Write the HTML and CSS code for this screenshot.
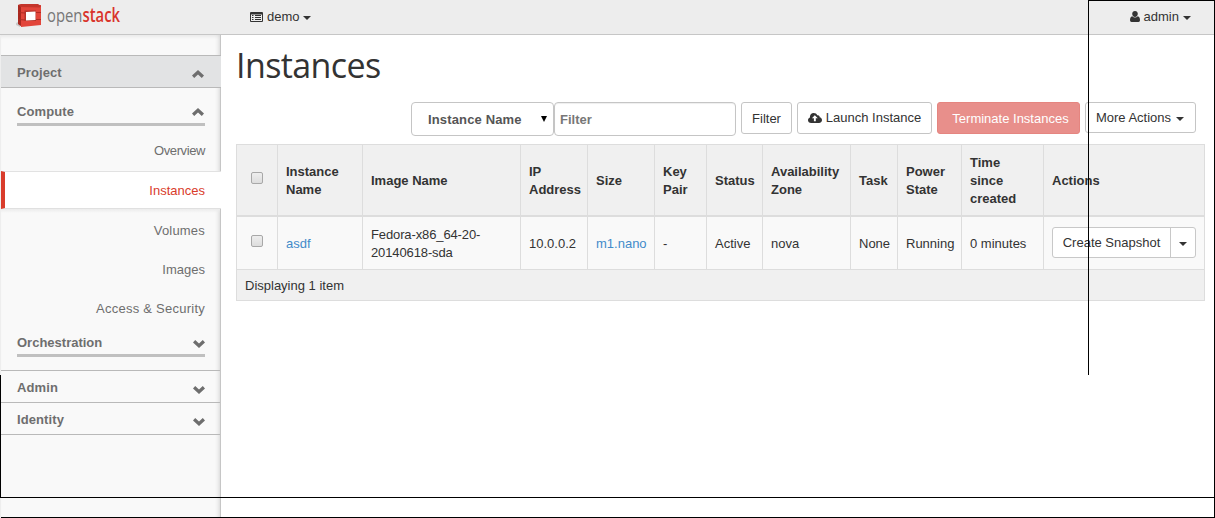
FILE: index.html
```html
<!DOCTYPE html>
<html lang="en">
<head>
<meta charset="utf-8">
<title>Instances</title>
<link rel="stylesheet" href="styles.css">
</head>
<body>
<svg class="defs" width="0" height="0">
  <symbol id="up" viewBox="0 0 12 8"><path d="M0 5.6 6 0l6 5.6L9.8 8 6 4.6 2.2 8z"/></symbol>
  <symbol id="down" viewBox="0 0 12 8"><path d="M0 2.4 2.200 0 6 3.400 9.800 0 12 2.400 6 8z"/></symbol>
</svg>
<header class="topbar">
  <svg class="logo" width="110" height="32" viewBox="0 0 110 32">
    <path fill="#c9c9c9" d="M-1 23l4-2v6l-4-2z"/>
    <path fill="#a9281f" d="M1 5l4-1v23l-4-3z"/>
    <path fill="#e2453a" d="M4 6l20-1v20L4 27z"/>
    <path fill="#c4352b" d="M1 5l4-1h16l3 2-1 1.500L4 7z"/>
    <path fill="#b5332a" d="M7.500 10.500H19V21H7.500z"/>
    <path fill="#fff" d="M9 12l9.500-.5V20L9 20.500z"/>
    <path stroke="#b02c22" fill="none" d="M1 12.500l7 .5M1 19.500l7 .5M19 12.500h5M19 19.500h5"/>
    <text x="30" y="21.500" textLength="73" lengthAdjust="spacingAndGlyphs" class="logo-text">open<tspan class="logo-stack">stack</tspan></text>
  </svg>
  <div class="project-pick">
    <svg width="13" height="10" viewBox="0 0 13 10"><path fill="#333" fill-rule="evenodd" d="M1 0h11q1 0 1 1v8q0 1-1 1H1Q0 10 0 9V1q0-1 1-1zM1 2.500V9h11V2.500z"/><path stroke="#333" d="M2 3.500h1.500M5 3.500h6M2 5.500h1.500M5 5.500h6M2 7.500h1.500M5 7.500h6"/></svg>
    <span>demo</span><i class="caret"></i>
  </div>
  <div class="user-pick">
    <svg width="10" height="11" viewBox="0 0 10 11"><path fill="#333" d="M5 0c1.700 0 2.800 1.200 2.800 2.800S6.600 6 5 6 2.200 4.400 2.200 2.800 3.300 0 5 0zM2.200 5.200Q5 7.800 7.800 5.200 10 5.700 10 9.300q0 1.700-1.500 1.700h-7Q0 11 0 9.300 0 5.700 2.200 5.200z"/></svg>
    <span>admin</span><i class="caret"></i>
  </div>
</header>
<div class="shell">
  <nav class="sidebar">
    <div class="dash active"><span>Project</span><svg><use href="#up"/></svg></div>
    <div class="group compute"><span>Compute</span><svg><use href="#up"/></svg></div>
    <ul class="panels">
      <li class="first">Overview</li>
      <li class="current">Instances</li>
      <li class="after">Volumes</li>
      <li>Images</li>
      <li class="wide">Access &amp; Security</li>
    </ul>
    <div class="group orchestration"><span>Orchestration</span><svg><use href="#down"/></svg></div>
    <div class="dash admin"><span>Admin</span><svg><use href="#down"/></svg></div>
    <div class="dash identity"><span>Identity</span><svg><use href="#down"/></svg></div>
  </nav>
  <main class="content">
    <h1>Instances</h1>
    <div class="actions">
      <div class="select"><span>Instance Name</span><svg width="6" height="6" viewBox="0 0 6 6"><path d="M0 0h6L3 6z"/></svg></div>
      <div class="field">Filter</div>
      <div class="btn filter">Filter</div>
      <div class="btn launch"><svg width="14" height="10" viewBox="0 0 14 10"><path fill="#333" fill-rule="evenodd" d="M3.200 10C1.200 10 0 8.700 0 7.200 0 5.900.8 5 1.900 4.500 1.700 2 3.300 0 5.700 0c1.700 0 3 .9 3.500 2.300 1.400-.6 2.800.5 2.400 2C13 4.600 14 5.700 14 7.100 14 8.700 12.800 10 11 10zM6.800 2.300 3.900 5.300h2V8.200h1.900V5.300h2z"/></svg><span>Launch Instance</span></div>
      <div class="btn danger">Terminate Instances</div>
      <div class="btn more"><span>More Actions</span><i class="caret"></i></div>
    </div>
    <table>
      <colgroup><col class="w41"><col class="w85"><col class="w158"><col class="w67"><col class="w67"><col class="w52"><col class="w56"><col class="w88"><col class="w47"><col class="w64"><col class="w82"><col class="w161"></colgroup>
      <thead><tr><th class="check"><i class="box"></i></th><th>Instance<br>Name</th><th>Image Name</th><th>IP<br>Address</th><th>Size</th><th>Key<br>Pair</th><th>Status</th><th>Availability<br>Zone</th><th>Task</th><th>Power<br>State</th><th>Time<br>since<br>created</th><th>Actions</th></tr></thead>
      <tbody><tr><td class="check"><i class="box"></i></td><td><a>asdf</a></td><td class="image">Fedora-x86_64-20-<br>20140618-sda</td><td>10.0.0.2</td><td><a>m1.nano</a></td><td>-</td><td>Active</td><td>nova</td><td>None</td><td>Running</td><td>0 minutes</td><td class="snap"><div class="split"><span>Create Snapshot</span><b><i class="caret"></i></b></div></td></tr></tbody>
      <tfoot><tr><td colspan="12">Displaying 1 item</td></tr></tfoot>
    </table>
  </main>
</div>
<i class="rule top"></i><i class="rule middle"></i><i class="rule right"></i><i class="rule left"></i><i class="rule lower"></i><i class="rule bottom"></i>
</body>
</html>
```
FILE: styles.css
```css
* { box-sizing: border-box; }
body { margin: 0; width: 1215px; height: 518px; overflow: hidden; position: relative; background: #fff; color: #333; font: 13px/18px "Liberation Sans", Arial, sans-serif; }
.defs { position: absolute; }
svg { display: block; flex: none; }
.topbar { height: 35px; background: #ededed; border-bottom: 1px solid #c6c6c6; display: flex; padding-left: 17px; }
.logo { overflow: visible; }
.logo-text { font: 19px "Open Sans", sans-serif; fill: #777; }
.logo-stack { fill: #d9332b; font-weight: 600; }
.project-pick, .user-pick { display: flex; align-items: center; height: 33px; }
.project-pick { margin-left: 123px; }
.project-pick span, .user-pick span { margin: 0 4px; }
.user-pick { margin-left: auto; margin-right: 24px; }
.caret { display: inline-block; border: 4px solid transparent; border-top-color: #333; border-bottom: 0; }
.topbar .caret { margin-top: 3px; margin-left: -1px; }
.user-pick .caret { margin-left: 0; }
.shell { display: flex; height: 483px; }
.sidebar { width: 221px; padding-top: 20px; background: #f9f9f9; border-left: 1px solid #eee; border-right: 1px solid #c6c6c6; box-shadow: inset -5px 0 4px -4px #d5d5d5, inset 0 4px 4px -3px #e2e2e2; color: #6e6e6e; }
.dash { height: 32px; border-bottom: 1px solid #b9b9b9; padding: 0 15px 0 16px; display: flex; align-items: center; justify-content: space-between; font-weight: bold; letter-spacing: .1px; }
.dash svg, .group svg { width: 12px; height: 8px; fill: #6e6e6e; }
.dash svg { margin-top: 6px; }
.dash.active { height: 33px; background: #e2e3e4; border-top: 1px solid #b9b9b9; margin-right: -1px; padding-right: 17px; padding-top: 2px; }
.dash.active svg { margin-top: 2px; }
.group { margin: 0 15px 0 16px; display: flex; justify-content: space-between; align-items: center; border-bottom: 3px solid #c0c0c0; font-weight: bold; }
.compute { height: 25px; margin-top: 13px; letter-spacing: .1px; }
.compute svg { margin-right: 1px; }
.orchestration { height: 29px; padding-top: 4px; }
.orchestration svg { margin-top: 1px; }
.panels { list-style: none; margin: 0; padding: 0; }
.panels li { height: 39px; padding-right: 15px; display: flex; align-items: center; justify-content: flex-end; }
.panels .wide { letter-spacing: .25px; }
.panels .first { height: 45px; padding-top: 5px; letter-spacing: -.4px; }
.panels .current { height: 38px; margin-right: -1px; padding-right: 16px; padding-top: 2px; background: #fff; color: #d93c2b; border-left: 4px solid #d93c2b; border-top: 1px solid #e2e2e2; border-bottom: 1px solid #e0e0e0; }
.panels .after { height: 41px; padding-top: 3px; background: linear-gradient(#ececec, transparent 4px); letter-spacing: .2px; }
.admin { margin-top: 13px; height: 33px; border-top: 1px solid #b9b9b9; }
.admin, .identity { padding-top: 2px; }
.admin svg, .identity svg { margin-top: 4px; }
.content { width: 994px; padding: 9px 10px 0 15px; }
h1 { margin: 0; height: 43px; font: 400 34px/42px "Open Sans", sans-serif; letter-spacing: -.6px; }
.actions { height: 57px; padding: 15px 9px 0 0; display: flex; align-items: flex-start; justify-content: flex-end; }
.select, .field, .btn { border: 1px solid #c5c5c5; border-radius: 4px; background: #fff; display: flex; align-items: center; }
.select, .field { height: 34px; padding-top: 2px; font-weight: bold; color: #555; }
.select { width: 143px; padding: 2px 6px 0 16px; justify-content: space-between; }
.select span { letter-spacing: .15px; }
.select svg { margin-top: -2px; }
.field { width: 182px; padding-left: 5px; color: #777; margin-right: 5px; box-shadow: inset 0 1px 1px #eee; }
.btn { height: 32px; justify-content: center; border-radius: 3px; margin-right: 5px; }
.filter { width: 51px; padding-top: 2px; }
.launch { width: 135px; gap: 4px; }
.danger { width: 143px; background: #e88f8b; border-color: #e58580; color: #fff; padding: 2px 0 0 4px; }
.more { width: 111px; height: 31px; gap: 5px; margin: 0; padding-right: 1px; }
.more .caret { margin-top: 3px; }
table { table-layout: fixed; width: 969px; border: 1px solid #ddd; border-right: 0; border-bottom: 0; border-collapse: separate; border-spacing: 0; }
th, td { border-right: 1px solid #ddd; border-bottom: 1px solid #ddd; padding: 2px 0 0 8px; text-align: left; white-space: nowrap; vertical-align: middle; }
th { height: 72px; background: #f0f0f0; border-bottom-width: 2px; }
td { height: 53px; background: #f9f9f9; }
tfoot td { height: 31px; background: #f0f0f0; }
a { color: #428bca; }
.image { letter-spacing: -.12px; }
.check { padding: 0 0 5px 14px; }
.box { display: block; width: 12px; height: 12px; border: 1px solid #a8a8a8; border-radius: 2px; background: linear-gradient(#eee, #ddd); }
.snap { padding: 0 0 1px 8px; }
.split { display: flex; width: 144px; height: 31px; border: 1px solid #c8c8c8; border-radius: 3px; background: #fff; }
.split span { width: 118px; border-right: 1px solid #c8c8c8; text-align: center; line-height: 29px; }
.split b { flex: 1; display: flex; align-items: center; justify-content: center; padding-top: 3px; }
.w41 { width: 41px; } .w85 { width: 85px; } .w158 { width: 158px; } .w67 { width: 67px; } .w52 { width: 52px; } .w56 { width: 56px; } .w88 { width: 88px; } .w47 { width: 47px; } .w64 { width: 64px; } .w82 { width: 82px; } .w161 { width: 161px; }
.rule { position: absolute; background: #000; }
.top { left: 1088px; top: 0; width: 127px; height: 1px; }
.middle { left: 1088px; top: 0; width: 1px; height: 375px; }
.right { right: 0; top: 0; width: 1px; height: 518px; }
.left { left: 0; top: 375px; width: 1px; height: 123px; }
.lower { left: 0; top: 497px; width: 1215px; height: 1px; }
.bottom { left: 1px; top: 517px; width: 1214px; height: 1px; }
```
